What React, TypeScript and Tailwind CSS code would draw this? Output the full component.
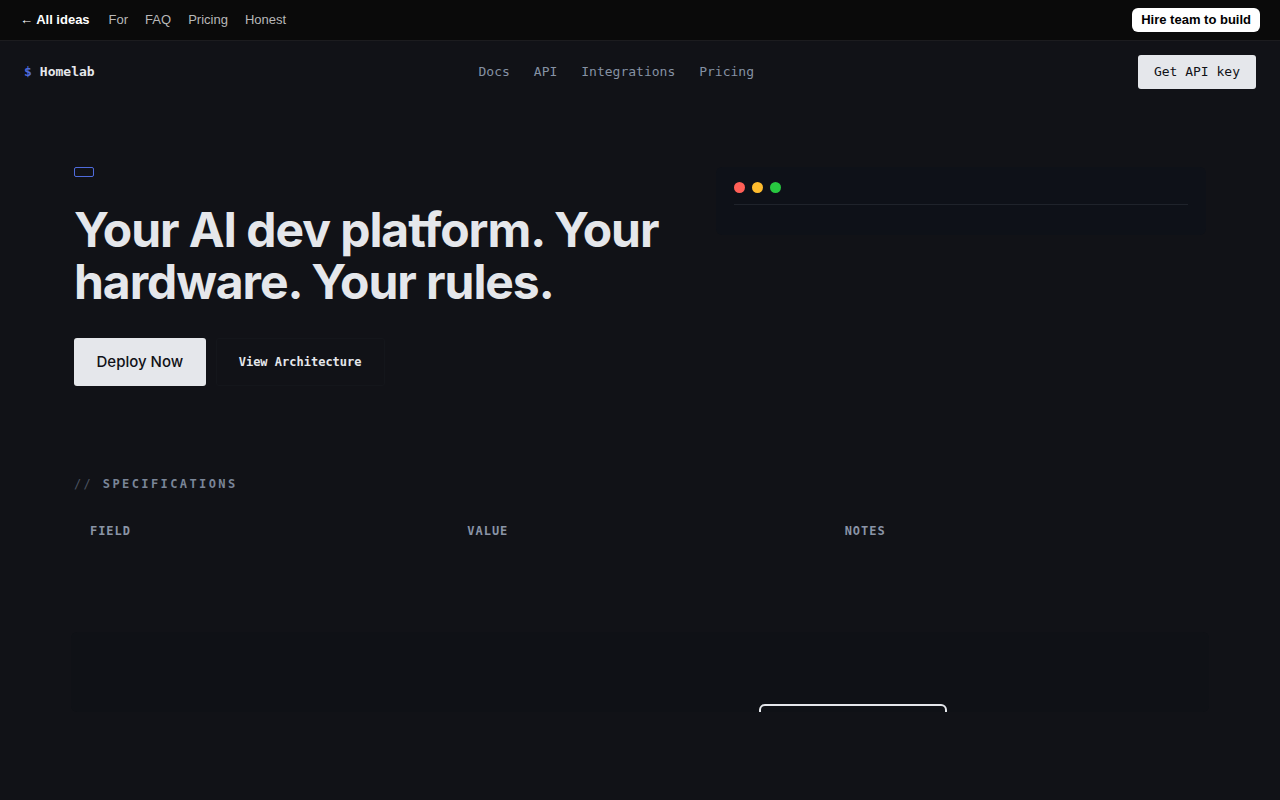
import React from 'react'

const topLinks = ['For', 'FAQ', 'Pricing', 'Honest']
const navLinks = ['Docs', 'API', 'Integrations', 'Pricing']
const columns = ['Field', 'Value', 'Notes']

const mono = "font-['DejaVu_Sans_Mono','Liberation_Mono',monospace]"

function TopBar() {
  return (
    <div className="h-[41px] bg-[#0a0a0a] border-b border-[#1c1c1f] flex items-center justify-between px-5 font-['Liberation_Sans',Arial,sans-serif] text-[13px]">
      <div className="flex items-center gap-[17px]">
        <a className="text-white font-bold mr-[2px]">← All ideas</a>
        {topLinks.map(link => (
          <a key={link} className="text-[#b8b8b8]">{link}</a>
        ))}
      </div>
      <button className="bg-white text-black font-bold rounded-md h-6 px-[9px] text-[13px]">
        Hire team to build
      </button>
    </div>
  )
}

function Nav() {
  return (
    <nav className={`h-[62px] flex items-center justify-between px-6 ${mono} text-[13px]`}>
      <div className="flex items-center gap-2">
        <span className="text-[#4f6bdc] font-bold">$</span>
        <span className="text-[#e5e7eb] font-bold">Homelab</span>
      </div>
      <div className="flex items-center gap-6 text-[#8591a3]">
        {navLinks.map(link => (
          <a key={link}>{link}</a>
        ))}
      </div>
      <button className="bg-[#e5e7eb] text-[#111217] rounded-[3px] h-[34px] px-4">Get API key</button>
    </nav>
  )
}

function Terminal() {
  return (
    <div className="w-[490px] self-start rounded-md bg-[#0e1118] px-[18px] pt-[15px] pb-[30px]">
      <div className="flex items-center gap-[7px] pb-[11px] border-b border-[#1f232b]">
        <span className="w-[11px] h-[11px] rounded-full bg-[#ff5f57]" />
        <span className="w-[11px] h-[11px] rounded-full bg-[#febc2e]" />
        <span className="w-[11px] h-[11px] rounded-full bg-[#28c840]" />
      </div>
    </div>
  )
}

function Hero() {
  return (
    <section className="flex justify-between pt-16 pb-[89px]">
      <div>
        <div className="w-5 h-[10px] border border-[#4f6bdc] rounded-[2px]" />
        <h1 className="mt-[27px] font-['Inter',sans-serif] font-bold text-[48px] leading-[52px] tracking-[-0.022em] text-[#e5e7eb]">
          Your AI dev platform. Your
          <br />
          hardware. Your rules.
        </h1>
        <div className="mt-[30px] flex items-center gap-[10px]">
          <button className="h-12 px-[22.5px] bg-[#e5e7eb] text-[#111217] rounded-[3px] font-['Inter',sans-serif] font-medium text-[15px]">
            Deploy Now
          </button>
          <button className={`h-12 px-[22px] border border-[#14161b] rounded-[3px] text-[#e5e7eb] font-bold text-[12px] ${mono}`}>
            View Architecture
          </button>
        </div>
      </div>
      <Terminal />
    </section>
  )
}

function Specs() {
  return (
    <section className={mono}>
      <div className="text-[12px] font-bold tracking-[0.2em] text-[#7a8598]">
        <span className="text-[#4b5261] font-normal">//</span> SPECIFICATIONS
      </div>
      <div className="mt-[29px] grid grid-cols-3">
        {columns.map(col => (
          <div key={col} className="px-4 text-[12px] font-bold tracking-[0.08em] uppercase text-[#8a94a6]">
            {col}
          </div>
        ))}
      </div>
      <div className="mt-[92px] -mx-[3px] h-20 overflow-hidden rounded-md bg-[#0f1116] pt-[72px] pl-[688px]">
        <div className="w-[188px] h-12 rounded-md border-2 border-[#e5e7eb]" />
      </div>
    </section>
  )
}

export default function App() {
  return (
    <div className="min-h-screen bg-[#111217]">
      <TopBar />
      <Nav />
      <main className="px-[74px] pb-20">
        <Hero />
        <Specs />
      </main>
    </div>
  )
}
